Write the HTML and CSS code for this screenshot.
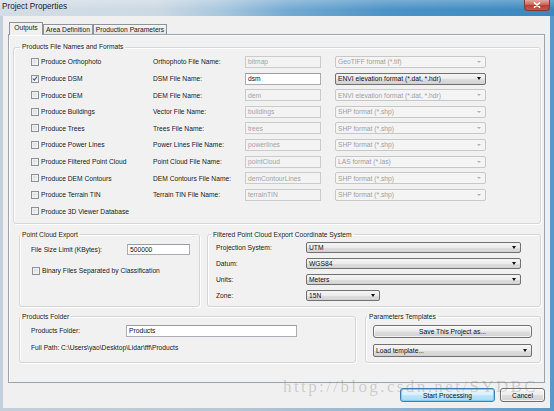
FILE: index.html
```html
<!DOCTYPE html>
<html>
<head>
<meta charset="utf-8">
<title>Project Properties</title>
<link rel="stylesheet" href="styles.css">
</head>
<body>
<div class="window">
  <div class="titlebar">
    <span class="title">Project Properties</span>
    <div class="close"><svg width="8" height="6" viewBox="0 0 8 6"><path d="M1.5 0.8 L6.5 5.2 M6.5 0.8 L1.5 5.2" stroke="#fff" stroke-width="1.6" stroke-linecap="round"/></svg></div>
  </div>
  <div class="client">
    <div class="tabs">
      <div class="tab active t1">Outputs</div>
      <div class="tab t2">Area Definition</div>
      <div class="tab t3">Production Parameters</div>
    </div>
    <div class="panel">
      <fieldset class="group products">
        <legend>Products File Names and Formats</legend>
        <div class="prod-grid">
          <div class="chk"><span class="cb"></span>Produce Orthophoto</div>
          <span class="lbl">Orthophoto File Name:</span>
          <span class="input dis">bitmap</span>
          <span class="select dis"><span>GeoTIFF format (*.tif)</span><i class="arr"></i></span>

          <div class="chk"><span class="cb checked"><svg width="7" height="7" viewBox="0 0 7 7"><path d="M1 3.6 L2.8 5.4 L6 1.2" fill="none" stroke="#3d5287" stroke-width="1.2"/></svg></span>Produce DSM</div>
          <span class="lbl">DSM File Name:</span>
          <span class="input">dsm</span>
          <span class="select"><span>ENVI elevation format (*.dat, *.hdr)</span><i class="arr"></i></span>

          <div class="chk"><span class="cb"></span>Produce DEM</div>
          <span class="lbl">DEM File Name:</span>
          <span class="input dis">dem</span>
          <span class="select dis"><span>ENVI elevation format (*.dat, *.hdr)</span><i class="arr"></i></span>

          <div class="chk"><span class="cb"></span>Produce Buildings</div>
          <span class="lbl">Vector File Name:</span>
          <span class="input dis">buildings</span>
          <span class="select dis"><span>SHP format (*.shp)</span><i class="arr"></i></span>

          <div class="chk"><span class="cb"></span>Produce Trees</div>
          <span class="lbl">Trees File Name:</span>
          <span class="input dis">trees</span>
          <span class="select dis"><span>SHP format (*.shp)</span><i class="arr"></i></span>

          <div class="chk"><span class="cb"></span>Produce Power Lines</div>
          <span class="lbl">Power Lines File Name:</span>
          <span class="input dis">powerlines</span>
          <span class="select dis"><span>SHP format (*.shp)</span><i class="arr"></i></span>

          <div class="chk"><span class="cb"></span>Produce Filtered Point Cloud</div>
          <span class="lbl">Point Cloud File Name:</span>
          <span class="input dis">pointCloud</span>
          <span class="select dis"><span>LAS format (*.las)</span><i class="arr"></i></span>

          <div class="chk"><span class="cb"></span>Produce DEM Contours</div>
          <span class="lbl">DEM Contours File Name:</span>
          <span class="input dis">demContourLines</span>
          <span class="select dis"><span>SHP format (*.shp)</span><i class="arr"></i></span>

          <div class="chk"><span class="cb"></span>Produce Terrain TIN</div>
          <span class="lbl">Terrain TIN File Name:</span>
          <span class="input dis">terrainTIN</span>
          <span class="select dis"><span>SHP format (*.shp)</span><i class="arr"></i></span>

          <div class="chk"><span class="cb"></span>Produce 3D Viewer Database</div>
        </div>
      </fieldset>

      <div class="mid-row">
        <fieldset class="group pce">
          <legend>Point Cloud Export</legend>
          <div class="pce-body">
            <div class="pce-row">
              <span class="pce-lbl">File Size Limit (KBytes):</span>
              <span class="input size">500000</span>
            </div>
            <div class="pce-row chkrow">
              <div class="chk"><span class="cb"></span>Binary Files Separated by Classification</div>
            </div>
          </div>
        </fieldset>
        <fieldset class="group coord">
          <legend>Filtered Point Cloud Export Coordinate System</legend>
          <div class="coord-grid">
            <span class="lbl">Projection System:</span>
            <span class="select wide"><span>UTM</span><i class="arr"></i></span>
            <span class="lbl">Datum:</span>
            <span class="select wide"><span>WGS84</span><i class="arr"></i></span>
            <span class="lbl">Units:</span>
            <span class="select wide"><span>Meters</span><i class="arr"></i></span>
            <span class="lbl">Zone:</span>
            <span class="select zone"><span>15N</span><i class="arr"></i></span>
          </div>
        </fieldset>
      </div>

      <div class="bot-row">
        <fieldset class="group folder">
          <legend>Products Folder</legend>
          <div class="folder-body">
            <div class="folder-row">
              <span class="folder-lbl">Products Folder:</span>
              <span class="input folder-in">Products</span>
            </div>
            <div class="path">Full Path: C:\Users\yao\Desktop\Lidar\fff\Products</div>
          </div>
        </fieldset>
        <fieldset class="group templates">
          <legend>Parameters Templates</legend>
          <div class="tpl-body">
            <div class="btn tpl-btn">Save This Project as...</div>
            <span class="select tpl-sel"><span>Load template...</span><i class="arr"></i></span>
          </div>
        </fieldset>
      </div>
    </div>
    <div class="buttons">
      <div class="btn default start">Start Processing</div>
      <div class="btn cancel">Cancel</div>
    </div>
  </div>
  <div class="watermark">http://blog.csdn.net/SYDBC</div>
</div>
</body>
</html>
```
FILE: styles.css
```css
* { box-sizing: border-box; }
html, body { margin: 0; padding: 0; }
body {
  width: 554px;
  height: 411px;
  overflow: hidden;
  font-family: "Liberation Sans", Arial, sans-serif;
  font-size: 6.7px;
  color: #1a1a1a;
  background: #f0f0f0;
}
.window {
  position: relative;
  width: 554px;
  height: 411px;
  display: flex;
  flex-direction: column;
  background: linear-gradient(to right, #c3cfda 0%, #b9c8d5 40%, #8fb3d0 72%, #5b97c4 100%);
}
.titlebar {
  height: 16px;
  display: flex;
  align-items: flex-start;
  justify-content: space-between;
  background:
    linear-gradient(rgba(255,255,255,0.25), rgba(255,255,255,0) 60%),
    linear-gradient(to right, #d3dde6 0%, #ccd9e3 28%, #a8c7de 40%, #74aad2 52%, #4c93c6 70%, #3b88bf 100%);
}
.title {
  font-size: 8.2px;
  line-height: 13px;
  padding-left: 2px;
  color: #1c1c1c;
}
.close {
  width: 26px;
  height: 11px;
  margin-right: 4px;
  display: flex;
  align-items: center;
  justify-content: center;
  background: linear-gradient(#e6a89f 0%, #d0665a 45%, #bb3f32 55%, #c7584b 100%);
  border: 1px solid #7f3b35;
  border-top: none;
  border-radius: 0 0 4px 4px;
}
.client {
  flex: 1;
  margin: 0 4px 3px 3px;
  background: #f0f0f0;
  padding: 6px 5px 6px 5px;
  display: flex;
  flex-direction: column;
}

/* tabs */
.tabs {
  height: 12px;
  display: flex;
  align-items: flex-end;
  padding-left: 1px;
  position: relative;
  z-index: 2;
}
.tab {
  height: 10px;
  border: 1px solid #8e9398;
  border-bottom: none;
  background: linear-gradient(#f5f5f5, #e4e4e4);
  display: flex;
  align-items: center;
  justify-content: center;
  line-height: 8px;
  color: #1a1a1a;
}
.tab.active {
  height: 13px;
  margin-bottom: -1px;
  background: #f0f0f0;
  padding-bottom: 2px;
}
.t1 { width: 34px; }
.t2 { width: 50px; }
.t3 { width: 74px; }

.panel {
  height: 349px;
  border: 1px solid #9ea3a8;
  background: #f1f1f1;
  padding: 8px 3px 0 4px;
  box-shadow: inset 1px 1px 0 #fdfdfd;
}

/* groups */
fieldset.group {
  margin: 0;
  padding: 0;
  min-width: 0;
  border: 1px solid #d3d7da;
  border-radius: 3px;
  box-shadow: inset 1px 1px 0 #ffffff, 1px 1px 0 #ffffff;
}
fieldset.group legend {
  padding: 0 2px;
  line-height: 8px;
  font-size: 6.7px;
  color: #1a1a1a;
}
.products legend { margin-left: 6px; }
.prod-grid {
  display: grid;
  grid-template-columns: 122px 92px 90px 151px;
  grid-auto-rows: 16.6px;
  align-items: center;
  padding: 2.7px 0 3.3px 17px;
}
.chk {
  display: flex;
  align-items: center;
  gap: 2px;
  white-space: nowrap;
  grid-column: 1;
}
.cb {
  width: 8px;
  height: 8px;
  border: 1px solid #8f9194;
  background: linear-gradient(135deg, #d5d7d9, #f7f7f7);
  box-shadow: inset 0 0 0 1px #eef0f2;
  display: flex;
  align-items: center;
  justify-content: center;
  flex: none;
}
.cb.checked { background: linear-gradient(135deg, #e3e6ea, #fbfbfb); }
.cb svg { display: block; }
.lbl { white-space: nowrap; color: #1a1a1a; }
.input {
  height: 12px;
  width: 76px;
  border: 1px solid #abadb3;
  border-top-color: #9a9ca3;
  background: #ffffff;
  padding: 0 2px;
  display: flex;
  align-items: center;
  color: #111;
  white-space: nowrap;
  overflow: hidden;
}
.input.dis {
  background: #f3f3f3;
  border-color: #cbcbcb;
  color: #a3a3a3;
}
.select {
  height: 12px;
  width: 151px;
  border: 1px solid #707070;
  border-radius: 2px;
  background: linear-gradient(#f5f5f5 0%, #ececec 50%, #dedede 52%, #d2d2d2 100%);
  padding: 0 4px 0 2px;
  display: flex;
  align-items: center;
  justify-content: space-between;
  white-space: nowrap;
  color: #111;
}
.select.dis {
  background: #f4f4f4;
  border-color: #c8c8c8;
  color: #9e9e9e;
}
.arr {
  width: 0;
  height: 0;
  border-left: 2.5px solid transparent;
  border-right: 2.5px solid transparent;
  border-top: 3px solid #111;
  flex: none;
}
.select.dis .arr {
  border-left-width: 2px;
  border-right-width: 2px;
  border-top: 2px solid #b0b0b0;
}

/* middle row */
.mid-row {
  display: flex;
  gap: 7px;
  margin: 7px 0 0 6px;
  height: 76px;
}
.pce { width: 181px; }
.pce legend { margin-left: 0; }
.pce-body { padding: 3.5px 0 0 11px; }
.pce-row {
  height: 15px;
  display: flex;
  align-items: center;
}
.pce-lbl { width: 96px; white-space: nowrap; }
.input.size { width: 63px; height: 11px; }
.chkrow { margin-top: 6px; padding-left: 1px; }
.coord { width: 334px; }
.coord legend { margin-left: 3px; }
.coord-grid {
  display: grid;
  grid-template-columns: 90px 215px;
  grid-auto-rows: 15.8px;
  align-items: center;
  padding: 1px 0 2.8px 8px;
}
.select.wide { width: 215px; height: 11px; }
.select.zone { width: 74px; height: 11px; }

/* bottom row */
.bot-row {
  display: flex;
  gap: 9px;
  margin: 6px 0 0 6px;
  height: 50px;
}
.folder { width: 337px; }
.folder legend { margin-left: 0; }
.folder-body { padding: 3px 0 0 11px; }
.folder-row {
  height: 14px;
  display: flex;
  align-items: center;
}
.folder-lbl { width: 95px; white-space: nowrap; }
.input.folder-in { width: 171px; height: 12px; }
.path {
  height: 14px;
  margin-top: 3px;
  display: flex;
  align-items: center;
  white-space: nowrap;
}
.templates { width: 176px; }
.templates legend { margin-left: 1px; }
.tpl-body {
  padding: 4px 0 0 7px;
  display: flex;
  flex-direction: column;
  gap: 6px;
}
.tpl-btn { width: 159px; height: 13px; }
.select.tpl-sel { width: 159px; height: 13px; }

/* buttons */
.btn {
  border: 1px solid #707070;
  border-radius: 3px;
  background: linear-gradient(#f6f6f6 0%, #ececec 48%, #dddddd 52%, #d0d0d0 100%);
  box-shadow: inset 0 0 0 1px rgba(255,255,255,0.7);
  display: flex;
  align-items: center;
  justify-content: center;
  white-space: nowrap;
  color: #111;
}
.buttons {
  display: flex;
  justify-content: flex-end;
  gap: 5px;
  margin-top: 5px;
  height: 14px;
}
.start { width: 95px; }
.cancel { width: 45px; }
.btn.default {
  border-color: #3c7fb1;
  box-shadow: inset 0 0 0 1px #7fd0f5;
  background: linear-gradient(#eaf6fd 0%, #d9f0fc 48%, #bee6fd 52%, #a7d9f5 100%);
}

.watermark {
  position: absolute;
  left: 283px;
  top: 378px;
  font-family: "Liberation Serif", "Times New Roman", serif;
  font-size: 17px;
  line-height: 17px;
  letter-spacing: 2.4px;
  color: rgba(120, 120, 120, 0.3);
  white-space: nowrap;
  pointer-events: none;
  z-index: 5;
}
```
